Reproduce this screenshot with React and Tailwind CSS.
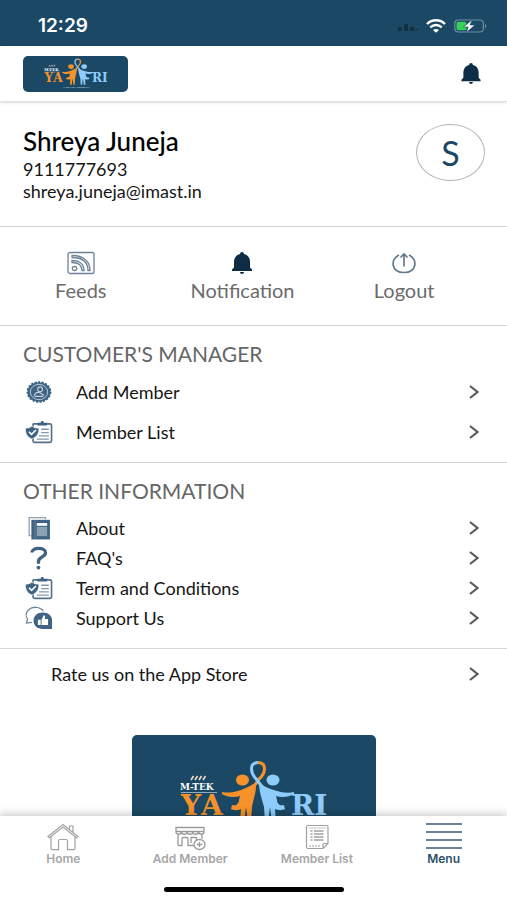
import React from "react";

function LogoArt({ className }) {
  return (
    <svg viewBox="0 0 150 72" className={className} role="img" aria-label="M-TEK Yatri">
      <g stroke="#f0d9cc" strokeWidth="1.6">
        <path d="M12 20l2.500-4M16 20l2.500-4M20 20l2.500-4M24 20l2.500-4" />
      </g>
      <text x="1" y="30" fill="#fff" fontSize="9" fontWeight="700" fontFamily="'DejaVu Serif', serif">M-TEK</text>
      <path d="M2 32.500h36" stroke="#c9d6de" strokeWidth="0.7" />
      <g fontSize="28" fontWeight="700" fontFamily="'DejaVu Serif', serif">
        <text x="2" y="55" fill="#f7922b" className="[font-kerning:none]">YA</text>
        <text x="112" y="55" fill="#8ecdfb">RI</text>
      </g>
      <ellipse cx="63.500" cy="20" rx="6.500" ry="5.500" fill="#f7922b" />
      <ellipse cx="94" cy="20" rx="6.500" ry="5.500" fill="#8ecdfb" />
      <path d="M79 2.500C88 3 87 13 80 19L74 28" fill="none" stroke="#f7922b" strokeWidth="3" />
      <path d="M79 2.500C70 3 71 13 78 20L84 28" fill="none" stroke="#8ecdfb" strokeWidth="3" />
      <path d="M43 32c9 2 20-1 33-9l1 5c-1 8-3 13-4 19l-1 15h-3l-2-15-2 15h-4l1-13c-4 2-8 1-10 0l1-4c4 1 7-1 7-5l1-4c-6 2-13 1-18-2z" fill="#f7922b" />
      <path d="M115 32c-9 2-20-1-30-6l-5-4c0 10 3 17 5 25l1 15h3l2-15 2 15h4l-1-13c4 2 8 1 10 0l-1-4c-4 1-7-1-7-5l-1-4c6 2 13 1 18-2z" fill="#8ecdfb" />
      <text x="76" y="69" textAnchor="middle" fill="#d4e0e8" fontSize="6" fontFamily="Lato, sans-serif">A LOYALTY PROGRAM</text>
    </svg>
  );
}

function Bell({ className }) {
  return (
    <svg viewBox="0 0 20 22" className={className} fill="#0e2c44" aria-hidden="true">
      <path d="M10 0a2 2 0 0 1 2 2c4 1 6 4 6 8v5.500l2 2V19H0v-1.500l2-2V10c0-4 2-7 6-8a2 2 0 0 1 2-2zM8 20h4c0 1.200-.9 2-2 2s-2-.8-2-2z" />
    </svg>
  );
}

function FeedIcon() {
  return (
    <svg viewBox="0 0 28 24" className="h-6 w-7" fill="none" stroke="#6d8296" strokeWidth="1.300" aria-hidden="true">
      <rect x="1" y="1.500" width="26" height="21" rx="2" />
      <ellipse cx="7.500" cy="17.500" rx="2.200" ry="2" />
      <path d="M5 11.500c7 0 10 3 10 8h2c0-6-4-10-12-10zM5 6.500c11 0 16 5 16 13h2c0-9-6-15-18-15z" />
    </svg>
  );
}

function LogoutIcon() {
  return (
    <svg viewBox="0 0 26 24" className="h-6 w-7" fill="none" stroke="#62798d" strokeWidth="1.700" aria-hidden="true">
      <path d="M8 4C-1 8 0 21.500 13 21.500S27 8 18 4M13 15.500V3M9.500 6.500L13 3l3.500 3.500" />
    </svg>
  );
}

function BadgeIcon() {
  return (
    <svg viewBox="0 0 26 22" className="h-6 w-8" fill="none" aria-hidden="true">
      <ellipse cx="13" cy="11" rx="10.500" ry="9" fill="#3f6382" stroke="#3f6382" strokeWidth="1.800" strokeDasharray="2 1.200" />
      <ellipse cx="13" cy="11" rx="8" ry="7" stroke="#b9cad8" strokeWidth="0.9" />
      <circle cx="14" cy="8.500" r="2.200" stroke="#c5d4df" />
      <path d="M8.500 14.500c1-3 3-3.500 5-3l4 2.500M9 15h8" stroke="#c5d4df" />
    </svg>
  );
}

function ClipboardIcon() {
  return (
    <svg viewBox="0 0 26 22" className="h-6 w-8" fill="none" aria-hidden="true">
      <path d="M8 3.500h15c1 0 1.500.5 1.500 1.500v14c0 1-.5 1.500-1.500 1.500H9c-1 0-1.500-.5-1.500-1.500V4z" fill="#fff" stroke="#54708a" strokeWidth="1.500" />
      <path d="M11.500 5V2.500h3c0-2 3-2 3 0h3V5z" fill="#3f6382" />
      <path d="M15 8.500h7M15 11.500h7M13 14.500h9M11 17.500h11" stroke="#8398aa" strokeWidth="1.200" />
      <path d="M0.500 7.500C3 7.500 5 7 6.500 5.500 8 7 10.500 7.500 13 7.500c0 5-2 8-6.500 10-4.500-2-6-5-6-10z" fill="#3f6382" stroke="#fff" strokeWidth="0.600" />
      <path d="M3.800 10.800l2.400 2.400 4-4" stroke="#fff" strokeWidth="1.400" />
    </svg>
  );
}

function BooksIcon() {
  return (
    <svg viewBox="0 0 26 22" className="h-6 w-8" fill="none" aria-hidden="true">
      <path d="M5.500 18H4V1.500h15V3" stroke="#8fa2b2" strokeWidth="1.200" />
      <rect x="6" y="3.500" width="17" height="18" fill="#3f6382" />
      <path d="M9.500 4v17" stroke="#7991a5" strokeWidth="0.700" />
      <rect x="11" y="6.500" width="9.500" height="2.500" fill="#fff" />
      <rect x="11" y="10" width="9.500" height="8.500" fill="#8ba1b4" />
    </svg>
  );
}

function QuestionIcon() {
  return (
    <svg viewBox="0 0 26 22" className="h-6 w-8" fill="none" stroke="#3f6382" aria-hidden="true">
      <path d="M6.500 6C6.500 0.800 19 0.800 19 6.200c0 4-6.500 3.600-6.500 8v2" strokeWidth="3" />
      <circle cx="12.500" cy="19.800" r="1.700" fill="#3f6382" stroke="none" />
    </svg>
  );
}

function SupportIcon() {
  return (
    <svg viewBox="0 0 26 22" className="h-6 w-8" fill="none" aria-hidden="true">
      <path d="M17 4.500C14 .5 7 0 3.500 3.500 0.500 6.500 .8 10 2.500 12L1.500 15.500l5-.5" stroke="#6f879b" strokeWidth="1.200" />
      <path d="M16.500 6c5 0 8.500 3 8.500 7.500V21h-8.500C11.500 21 8 18 8 13.500S11.500 6 16.500 6z" fill="#3f6382" />
      <path d="M12 12.500h2.500v5H12zM15.300 12.500l2-4c1.400 0 1.600 1.500 1 3.500h3v5.500h-6z" fill="#fff" />
    </svg>
  );
}

function Chevron() {
  return (
    <svg viewBox="0 0 10 14" className="h-3.5 w-2.5 shrink-0" fill="none" stroke="#5b5b5b" strokeWidth="2.200" aria-hidden="true">
      <path d="M1 1l7.500 6L1 13" />
    </svg>
  );
}

function Row({ Icon, label, tall }) {
  return (
    <li>
      <a href="#" className={`flex items-center ${tall ? "h-10" : "h-[30px]"}`}>
        <span className="w-[53px] shrink-0"><Icon /></span>
        <span className="flex-1 text-[18px] leading-6">{label}</span>
        <Chevron />
      </a>
    </li>
  );
}

function Section({ title, rows, tall }) {
  return (
    <section className={`border-b border-[#d6d6d6] pl-[23px] pr-7 pt-4 ${tall ? "pb-2.5" : "pb-[15px]"}`}>
      <h2 className={`text-[21px] leading-6 text-[#666] ${tall ? "mb-1.5" : "mb-2.5"}`}>{title}</h2>
      <ul>
        {rows.map(([Icon, label]) => <Row key={label} Icon={Icon} label={label} tall={tall} />)}
      </ul>
    </section>
  );
}

function HomeIcon() {
  return (
    <svg viewBox="0 0 32 28" className="h-7 w-8" fill="none" stroke="#a3a3a3" strokeWidth="1.200" aria-hidden="true">
      <path d="M1 13.500L16 1.500l15 12-1.500 1.300L16 4 2.500 14.800zM4 14v11.500c0 .8.500 1.200 1.200 1.200h6.300V18c0-1 .5-1.500 1.500-1.500h6c1 0 1.500.5 1.500 1.500v8.700h6.300c.7 0 1.200-.4 1.200-1.200V14M22.500 6V3H26v6" />
    </svg>
  );
}

function StoreIcon() {
  return (
    <svg viewBox="0 0 32 28" className="h-7 w-8" fill="none" stroke="#9b9b9b" strokeWidth="1.300" aria-hidden="true">
      <path d="M2 4.500h28v4.500c0 3-5 3-5.600 0 0 3-5.600 3-5.600 0 0 3-5.600 3-5.600 0 0 3-5.600 3-5.600 0C7 12 2 12 2 9zM2 8.500h28" />
      <path d="M4 12v9.500c0 .7.300 1 1 1h3V16c0-1 .4-1.500 1.300-1.500h3.400c.9 0 1.300.5 1.300 1.500v6.500h6M17 20v-5.500h5.500V17M28 12v4" />
      <ellipse cx="25.500" cy="21.500" rx="5.500" ry="5" fill="#fff" />
      <path d="M25.500 19v5M22.700 21.500h5.600" />
    </svg>
  );
}

function ListIcon() {
  return (
    <svg viewBox="0 0 32 28" className="h-7 w-8" fill="none" stroke="#a0a0a0" strokeWidth="1.200" aria-hidden="true">
      <path d="M22 25.500H7c-1 0-1.500-.5-1.500-1.500V4c0-1 .5-1.500 1.500-1.500h18.500c1 0 1.500.5 1.500 1.500v16.500zM22 25.500v-4c0-.7.300-1 1-1h4" />
      <path d="M9.500 8h2M13 8h9.500M9.500 11h2M13 11h9.500M9.500 14h2M13 14h9.500M9.500 17h2M13 17h9.500" strokeWidth="1.500" />
      <path d="M8 23h12" strokeDasharray="2 1" />
      <path d="M8 5h17" strokeWidth="0.600" />
    </svg>
  );
}

function MenuIcon() {
  return (
    <svg viewBox="0 0 36 28" className="h-7 w-9" stroke="#6c8298" strokeWidth="2" aria-hidden="true">
      <path d="M0 1h36M0 9h36M0 17h36M0 25h36" />
    </svg>
  );
}

const quick = [
  [FeedIcon, "Feeds"],
  [() => <Bell className="h-6 w-5" />, "Notification"],
  [LogoutIcon, "Logout"],
];

const tabs = [
  [HomeIcon, "Home"],
  [StoreIcon, "Add Member"],
  [ListIcon, "Member List"],
  [MenuIcon, "Menu"],
];

export default function App() {
  return (
    <div className="flex h-screen flex-col overflow-hidden bg-white font-[Lato,sans-serif] text-[#161616]">
      <div className="flex h-[46px] shrink-0 items-center justify-between bg-[#1b4965] pl-[38px] pr-5 pt-1.5">
        <time className="font-[Inter,sans-serif] text-[19px] font-semibold leading-6 text-white">12:29</time>
        <div className="flex items-center gap-2">
          <svg viewBox="0 0 22 10" className="h-2.5 w-[22px]" fill="#12303f" aria-hidden="true">
            <rect x="2" y="6" width="4" height="4" rx="1" />
            <rect x="8" y="3" width="4" height="7" rx="1" />
            <rect x="14" y="6" width="4" height="4" rx="1" />
            <rect x="19" y="7" width="3" height="3" rx="1" opacity="0.500" />
          </svg>
          <svg viewBox="0 0 20 14" className="h-3.5 w-5" fill="none" stroke="#fff" strokeWidth="2.400" aria-hidden="true">
            <path d="M1 5c5-5 13-5 18 0M4.300 8.300c3.300-3 8.100-3 11.400 0" />
            <path d="M7 11c1.700-1.500 4.300-1.500 6 0l-3 2.700z" fill="#fff" stroke="none" />
          </svg>
          <svg viewBox="0 0 33 14" className="h-3.5 w-[33px]" fill="none" aria-hidden="true">
            <rect x="0.800" y="1" width="28.500" height="12" rx="3.500" stroke="#6f8fa2" strokeWidth="1.200" />
            <path d="M31 5c1.700.4 1.700 3.600 0 4z" fill="#6f8fa2" />
            <rect x="2.500" y="2.800" width="10" height="8.400" rx="2" fill="#34d058" />
            <path d="M18.500 0.500L9.500 8h4.700l-2 5.500L21 6h-5z" fill="#fff" stroke="#1b4965" strokeWidth="0.600" />
          </svg>
        </div>
      </div>

      <header className="z-10 flex h-14 shrink-0 items-center justify-between border-b border-[#e2e2e2] pl-[23px] pr-[26px] shadow-sm">
        <div className="flex h-9 w-[105px] items-center justify-center rounded-[5px] bg-[#1b4965]">
          <LogoArt className="h-[31px] w-[66px]" />
        </div>
        <button type="button" aria-label="Notifications"><Bell className="h-[21px] w-5" /></button>
      </header>

      <main className="min-h-0 flex-1 overflow-y-auto [scrollbar-width:none]">
        <section className="flex items-start justify-between border-b border-[#d6d6d6] pb-6 pl-[23px] pr-[22px] pt-[22px]">
          <div className="pt-[3px]">
            <h1 className="text-[26px] font-medium leading-7 text-black">Shreya Juneja</h1>
            <p className="mt-[3px] text-[18px] leading-[22px]">9111777693</p>
            <p className="text-[18px] leading-[22px]">shreya.juneja@imast.in</p>
          </div>
          <div className="flex h-[57px] w-[69px] items-center justify-center rounded-[50%] border border-[#b5b5b5] text-[34px] leading-none text-[#1b4965]">S</div>
        </section>

        <nav aria-label="Quick actions" className="grid grid-cols-3 border-b border-[#d6d6d6] pb-[23px] pr-[22px] pt-6">
          {quick.map(([Icon, label]) => (
            <button key={label} type="button" className="flex flex-col items-center gap-[3px] text-[20px] leading-6 text-[#6b6b6b]">
              <Icon />
              {label}
            </button>
          ))}
        </nav>

        <Section title="CUSTOMER'S MANAGER" tall rows={[[BadgeIcon, "Add Member"], [ClipboardIcon, "Member List"]]} />
        <Section
          title="OTHER INFORMATION"
          rows={[
            [BooksIcon, "About"],
            [QuestionIcon, "FAQ's"],
            [ClipboardIcon, "Term and Conditions"],
            [SupportIcon, "Support Us"],
          ]}
        />

        <a href="#" className="flex h-[50px] items-center justify-between pl-[51px] pr-7 text-[18px] leading-6">
          Rate us on the App Store
          <Chevron />
        </a>

        <div className="mx-auto mb-8 mt-9 flex h-[122px] w-[244px] items-center justify-center rounded-[5px] bg-[#1b4965]">
          <LogoArt className="h-[72px] w-[150px]" />
        </div>
      </main>

      <nav aria-label="Main" className="z-10 shrink-0 bg-white pb-2 shadow-[0_-2px_8px_rgba(0,0,0,0.22)]">
        <div className="grid grid-cols-4 pb-5 pt-[7px]">
          {tabs.map(([Icon, label]) => (
            <a
              key={label}
              href="#"
              className={`flex flex-col items-center font-[Inter,sans-serif] text-[12px] font-semibold leading-4 ${label === "Menu" ? "text-[#2c5069]" : "text-[#a6a6a6]"}`}
            >
              <Icon />
              {label}
            </a>
          ))}
        </div>
        <div className="mx-auto h-[5px] w-[180px] rounded-full bg-black" />
      </nav>
    </div>
  );
}
